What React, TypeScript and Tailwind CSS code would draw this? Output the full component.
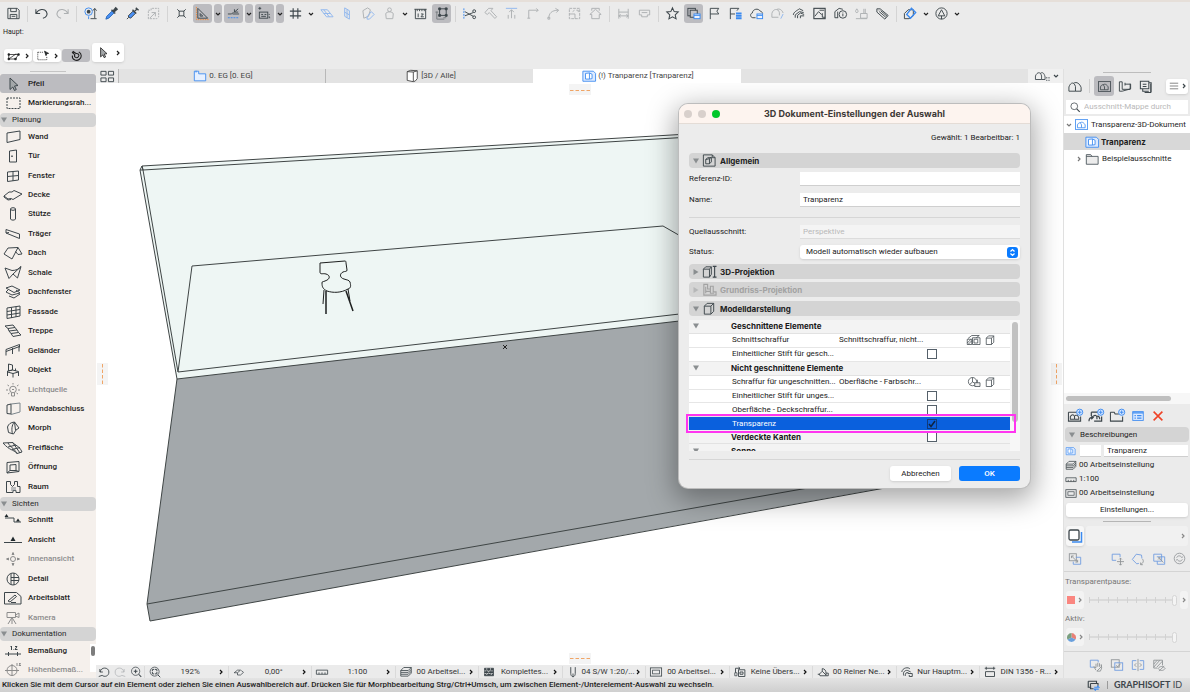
import React from "react";

type IconProps = {
  name: string;
  w?: number;
  h?: number;
  className?: string;
};

/* every glyph is drawn on a 20 x 16 grid */
const glyphs: Record<string, React.ReactNode> = {
  save: <><path d="M4 2.500h10l2 2v9H4z" /><path d="M7 2.500v3.500h6V2.500M6.500 13.500v-4.500h7v4.500M8 11h4" /></>,
  undo: <path d="M4 3.500v4.500h4.500M4.300 7.800C7 3 13 2.500 15.200 6c1.800 3.200 0 6.500-3.700 7" strokeWidth="1.100" />,
  redo: <path d="M16 3.500v4.500h-4.500M15.700 7.800C13 3 7 2.500 4.800 6c-1.800 3.200 0 6.500 3.700 7" strokeWidth="1.100" />,
  pick: <><circle cx="8" cy="6" r="4" stroke="#3b8af0" /><circle cx="8" cy="6" r="2" fill="#3d464b" stroke="none" /><path d="M8 11v3" stroke="#3b8af0" /><path d="M14.500 3v10M12.500 5l2-2.500 2 2.500M10 13.500h6.500" /></>,
  dropper: <><path d="M4 14l1-3 6-6 2 2-6 6z" fill="#4a90f5" stroke="#2465b8" /><path d="M10 4l4 4M12 5l2.500-3 1.500 1.500L13 6z" fill="#3d464b" strokeWidth="1.500" /></>,
  syringe: <><path d="M4 14l2-2M6 12l-.500-1.500 5-5 2.500 2.500-5 5z" fill="#4a90f5" /><path d="M10 4l4 4M12 6l3-3M13.500 2l3 2.500" strokeWidth="1.500" /></>,
  paste: <><path d="M4.500 13.500v-9h3v-2h8v9l-2 2z" strokeDasharray="2 1" /><path d="M8 7h4v4M12 7l-6 6" /></>,
  snap: <><rect x="7.500" y="5.500" width="5" height="5" /><path d="M5.500 3.500l2 2M14.500 3.500l-2 2M5.500 12.500l2-2M14.500 12.500l-2-2" /></>,
  triangle: <><path d="M5 2.500v10.500h10.500z" /><path d="M7.500 8v2.800h2.800z" /><path d="M3.500 1v13.500h13" stroke="#ee8a3c" strokeDasharray="1.500 1" /></>,
  guide: <><path d="M4 8.500h4l2-2M9 8.500h7M11 6.500l4-3.500M11 3.500v3h4" /><path d="M4 12.500h12" stroke="#3b8af0" strokeDasharray="2 1" /></>,
  tracker: <><path d="M5 1v3M3.500 2.500h3" /><rect x="4.500" y="6.500" width="9" height="6.500" /><path d="M6.500 9h2M10 9h2M6.500 11h5M15 8.500v1M15 11v1.500h1" /></>,
  grid: <path d="M7.500 2.500v11M12.500 2.500v11M4 5.500h12M4 10.500h12" strokeWidth="1.200" />,
  planeA: <path d="M4 4h7l6 7.500h-7zM7 4l6 7.500M7 8h7" stroke="#8fb6ee" />,
  planeB: <path d="M7 2l5 3v9l-5-3zM9.500 3.500v9M7 6.500l5 3" stroke="#8fb6ee" />,
  planeC: <><path d="M4 5l5-3 3 2-2 7-5 2z" /><path d="M13 6l3 3-5 5h-2.500v-2.500z" stroke="#8fb6ee" /></>,
  person: <><circle cx="10" cy="4" r="2" /><path d="M6.500 13.500l-.500-5c0-3 8-3 8 0l-.500 5z" /></>,
  ruler12: <><path d="M4.500 3.500v10h11v-10M3.500 3.500h13M6.500 3.500v2M9 3.500v2M11.500 3.500v2M14 3.500v2" /><path d="M7.500 8v4M10.500 8.500h2.500l-2.500 3h3" /></>,
  transform: <><rect x="8" y="3" width="7" height="7" /><path d="M7 2h2v2H7zM14 2h2v2h-2zM14 9h2v2h-2zM7 9h2v2H7z" fill="#3d464b" /><path d="M5 6v8h8M3.500 6.500h3M12 12.500h3" stroke="#777d80" /></>,
  scissors: <><path d="M4 2.500v11" stroke="#3b8af0" strokeDasharray="2 1" /><path d="M5 10.500l9-3.500M5 6l9 5" /><circle cx="15" cy="5.500" r="1.500" /><circle cx="15" cy="12" r="1.500" /></>,
  hammer: <path d="M4 7l4-4.500h4.500l-2 2.500 6 6.500-1.800 1.800-6-6.300L6.500 9z" />,
  stretch: <><path d="M4 2.500h12" stroke="#8fb6ee" /><path d="M10 4v9M7.500 6.500L10 4l2.500 2.500M6.500 13.500v-4M13.500 13.500v-4" /></>,
  corner: <path d="M6 13V4.500h10M14 2.500l2 2-2 2M4.500 13h3" />,
  arc: <path d="M5 13C5 8 8 4.500 15 4.500M12 2.500l3.500 2-2.500 2.500M4 12h2v2H4z" />,
  resize: <><rect x="4.500" y="2.500" width="11" height="11" strokeDasharray="3 1" /><path d="M4.500 8.500h6v5M12 4.500h2v2M8 6l2-1.500" /></>,
  house: <path d="M4 9l6-5.500L16 9h-2v4.500H6V9zM6 5V2.500h8V5" />,
  align: <path d="M5 3v10.500M15 3v10.500M5 6.500h10M5 10.500h10M7 9l-2 1.500 2 1.500M13 9l2 1.500-2 1.500" />,
  distribute: <path d="M4.500 4.500h11v5h-2.500v2H7v-2H4.500zM7 7h6" />,
  star: <path d="M10 2l1.800 4 4.300.400-3.200 3 .900 4.300L10 11.500l-3.800 2.200.900-4.300-3.200-3 4.300-.400z" strokeWidth="1.100" />,
  palette: <><rect x="4" y="2.500" width="8" height="8" /><rect x="6.500" y="4.500" width="7.500" height="7.500" fill="#c4c4c8" /><rect x="10.500" y="8.500" width="6.500" height="5" fill="#eef4ff" stroke="#3b8af0" /><path d="M10.500 10h6.500" stroke="#3b8af0" /></>,
  flag: <path d="M5.500 14V2.500h9l-2 3 2 3h-9" />,
  flag2: <><path d="M4.500 14V2.500h9l-2 2.500M4.500 8.500h5" /><path d="M10.500 7h6v2h-6zM10.500 9.500h6v2h-6zM10.500 12h6v2h-6z" fill="#3b8af0" stroke="none" /></>,
  cloud: <><path d="M9 12.500H6C3 12 3 8 5.500 7.500 6 3 12 2 14 5.500c2 .500 2.500 2 2.500 2.500" /><rect x="10.500" y="8.500" width="6" height="5" fill="#eef4ff" stroke="#3b8af0" /><path d="M10.500 10h6" stroke="#3b8af0" /></>,
  cloudEdit: <><path d="M11 12H4V8C5 3 11 2 12 7v3M9.500 3.500c3-1 5.500 1 6.500 4" /><path d="M16 8.500l-2.500 5" stroke="#8fb6ee" /></>,
  houses: <path d="M4.500 9.500c0-3 4.500-5 6.500-6.500l4 2M6.500 12.500v-3L11 6l4.500 1M9 13v-3l3-2.500 4 1.500M12 13v-2.500h4" />,
  picture: <><rect x="4" y="2.500" width="12" height="11" strokeWidth="1.200" /><path d="M5 11l4-5 3 3 1-1v4h3M10 4.500h5" /></>,
  info: <><path d="M7.500 12.500H4V6l4.500-3.500 4 1M7 12.500V6" /><circle cx="12.500" cy="9" r="4" /><path d="M12.500 8v3M12.500 6.500v.500" /></>,
  paint: <path d="M5 3c-2 2.500-1.500 4 0 4s2-1.500 0-4zM9 8h7v5H9zM12.500 8V3M4 13.500h12M14 3v5" />,
  tag: <path d="M4 3h3.500l8.500 7-3.500 4L4 6.500zM6.500 6l7 6M8 5l7 6M6 4.500h.500" />,
  cubes: <><path d="M3.500 8L7.500 4H13v6.500l-4.500 3h-5z" /><path d="M11 2.500l4.500 4.500L10 13 6 9z" stroke="#3b8af0" strokeWidth="1.500" /></>,
  circleTri: <><circle cx="10" cy="8" r="6" /><path d="M10 4l3.500 6.500h-7zM10 10.500V14" /></>,
  arrow: <path d="M7 2l8 7.500-3.500.500 1.800 3.500-1.800 1L9.800 11 7 13.500z" fill="#a3a7a9" />,
  marquee: <rect x="4" y="3" width="13" height="10.500" strokeDasharray="2 1" />,
  wall: <path d="M4 4l13-2v8.500L4 13.500z" />,
  door: <><path d="M6.500 3l7-1v12h-7z" /><path d="M9 7.500v1.500" strokeWidth="1.500" /></>,
  window: <path d="M4.500 4l11-1v9l-11 1.500zM10 3.500v9.500M4.500 8.500l11-1" />,
  slab: <path d="M1 9l5-4h3l2-1.500L19 7l-9 5.500-2-1-3 .500zM1 9v1l4 3 3-.500" />,
  column: <><ellipse cx="10" cy="3" rx="2.500" ry="1.300" /><path d="M7.500 3v10c0 1.500 5 1.500 5 0V3" /></>,
  beam: <path d="M3 3.500L16.500 8v4.500L3 7zM3 7l3-.500" />,
  roof: <path d="M1 9L5 3l10-.500L9 14zM15 2.500L19 9l-4 .500-2.500-3" />,
  shell: <path d="M2 3l7 2.500c4 0 7-1.500 9-4L14.500 13 10 9l-4 4.500zM10 9l8-7.500" />,
  skylight: <path d="M3 4l6-2 8 4-6 2.500zM3 8l6 3 8-2-4-3M6 12l5 2 6-4M5 6L3 8" />,
  facade: <path d="M4 4l13-2v10L4 14.500zM8.500 3.500V14M13 2.500V13M4 7.500l13-2M4 11l13-2" />,
  stair: <path d="M2 3l8-1 2 2.500-7 1zM5 5.500L6 8l8-1-2-2.500M6 8l2 2.500 7.500-1L14 7M8 10.500l2 3 8-1.500-2.500-2.500" />,
  rail: <path d="M3 8.500l13.500-5M3 6.500l13.500-5v3M3 6.500v6M9.500 5V11M16 3v5.500" />,
  chair: <path d="M5.500 2l4 1v5l-4 1zM4.500 9l5-1 6 1.500V14M4.500 9v5M10 11v4.500M4.500 10l5.500 1.500 5.500-1.500M12.500 6.500v2.500" />,
  bulb: <><circle cx="10" cy="7.500" r="3.300" /><path d="M8.500 11v3h3v-3M10 1v1.500M4.500 3l1.500 1M15.500 3L14 4M3 8h2M15 8h2M5 12l1.500-1M15 12l-1.500-1M9 7l1 1 1-1" /></>,
  wallend: <><path d="M4 4l4-1v10l-4-.500z" /><path d="M8 3l9-1v9l-9 2.500" stroke="#7c868c" /></>,
  morph: <path d="M4.500 7c1-3 3-4.500 7-5l4.500 6-3 2-2.500 4-5-1.500zM11.500 2c-3 3-3 8-2 12M11.500 2l1 8" />,
  mesh: <path d="M0 3l10-.500C12 6 16 5 19 12l-5 1.500C10 9 7 11 0 3zM5 7l8-2M9 9.500l8-2M5 3c3 5 5 4 9 10.500M10 3l7 10" />,
  opening: <path d="M4 3.500l12-1v10L4 14zM7 6l6-.500v6H7zM7 11.500L4 14M13 11.500l3 1" />,
  room: <><path d="M3.500 2.500h4v3l2 2 2-2v-3h3v5H17v6h-4v-2h-3v2H3.500z" /><path d="M8 9h5M8 11h5" stroke="#7c868c" /></>,
  section: <><path d="M2 6h9v4h7" /><path d="M1.500 5l2-3 2 3zM13 9.500l2-3 2 3z" fill="#1e272b" stroke="none" /></>,
  elevation: <><path d="M1 10.500h18" /><path d="M7.500 9L10 4.500 12.500 9z" fill="#1e272b" stroke="none" /></>,
  interior: <><circle cx="10" cy="8" r="2.500" /><path d="M9 3.500l1-2 1 2zM9 12.500l1 2 1-2zM5.500 7l-2 1 2 1zM14.500 7l2 1-2 1z" fill="#8c8c8c" /></>,
  detail: <><circle cx="10" cy="8" r="6" /><path d="M8 2.500v11M11 2v12M8 6.500h8M8 9.500h8" /></>,
  sheet: <><path d="M1.500 2.500h12l4.500 4v7.500H1.500z" /><path d="M5 11l7-6 1.500 1.500L7 12zM8 12.500h5" /></>,
  camera: <path d="M4 2.500h8.500v5H4zM12.500 5L16 3v4.500L12.500 6M9 7.500L5 14M9 7.500l4 6.500M9 8v6" />,
  dimension: <><path d="M2 11h16M5.500 9v4M14.500 9v4" /><path d="M7.500 4l1-1v4M10 6.500h.500M12 3.500h2l-2 3h2.500" /></>,
  level: <><circle cx="9" cy="8.500" r="5" /><path d="M2 8.500h14M9 2v12M14 1v3M16 1.500h1.500l-1.500 2h2" /></>,
  quad: <path d="M3.500 2.500h5.500v4H3.500zM11.500 2.500H17v4h-5.500zM3.500 9.500h5.500v4H3.500zM11.500 9.500H17v4h-5.500z" />,
  planTab: <path d="M3.500 2.500h5v3h8v8h-13zM5.500 2v2" stroke="#3b8af0" fill="#e6f0ff" />,
  box3d: <path d="M4.500 3l7 .500v11l-7-1.500zM11.500 3.500L16 2v9l-2.500 3h-2M4.500 3l4-1.500 7.500.500" fill="#fff" />,
  doc3d: <><path d="M3 2.500h12l2.500 2.500v9H3z" stroke="#3b8af0" fill="#dceaff" /><path d="M6 5l4.500-.500v7L6 11.500zM10.500 4.500l3 1.500v5l-3 .500" stroke="#3b8af0" fill="#fff" /></>,
  doc3dDark: <><path d="M4 2h9.500l3 3v9H4z" /><path d="M6.500 7l4-1v5.500h-4zM10.500 6l2-1.500v5l-2 2M6.500 7l2-2h4" /><path d="M13.500 2v3h3" /></>,
  clouds: <path d="M3.500 13V8.500C5.500 3 9 3 10.500 8v5zM8.500 4.500C12 2.500 15 5 16.500 9v4h-6" />,
  viewMap: <><rect x="2.500" y="2" width="15" height="12" /><path d="M5 12V8.500c2-4 4-3 5 0V12zM8 6c3-2 5 0 6.500 2.500V12H10" /></>,
  layout: <path d="M4 13V3h3v8h8.500V5M4 13H7l9-2.500V5.500H10M10 4v3" />,
  publish: <path d="M4 2.500h9v8H4zM6.500 10.500V13H13M15 5v9.500H8.500M13 4h2.500v10M6.500 5.500h4M6.500 8h4" strokeWidth="1.100" />,
  menu: <path d="M4 4h12M4 8h12M4 12h12" stroke="#555" />,
  search: <><circle cx="9" cy="7" r="4.500" /><path d="M12.300 10.500l4 4" strokeWidth="1.600" /></>,
  folder: <path d="M3.500 3h5L10 5h7v9H3.500zM3.500 5H10" fill="#ececec" />,
  newView: <><path d="M3 4.500h9M3 4.500V14h13V9M5 12V9c2-3 4-2 4.500 0v3zM10 8c2-1 3 0 4 2v2h-4" strokeWidth="1.100" /><circle cx="15" cy="4.500" r="3.300" stroke="#3b8af0" fill="#dceaff" /><path d="M13 4.500h4M15 2.500v4" stroke="#3b8af0" /></>,
  cloneView: <><path d="M5 4.500h7M5 4.500v4M16 9v5H8M7 9c2-2 4-1 4 1v2M11 9c2-1 3 1 3 3M2.500 14c0-3 1-4 4-4M5 8.500l2 1.500-2 2" strokeWidth="1.300" /><circle cx="15" cy="4.500" r="3.300" stroke="#3b8af0" fill="#dceaff" /><path d="M13 4.500h4M15 2.500v4" stroke="#3b8af0" /></>,
  newFolder: <><path d="M3 4.500h4l1 2h4M16 9v5H3V4.500" strokeWidth="1.100" /><circle cx="15" cy="4.500" r="3.300" stroke="#3b8af0" fill="#dceaff" /><path d="M13 4.500h4M15 2.500v4" stroke="#3b8af0" /></>,
  settingsBlue: <><rect x="4" y="3" width="12" height="10" stroke="#3b8af0" fill="#dceaff" /><path d="M4 4.500h12M6 7.500h1.500M6 10.500h1.500M9 7.500h5M9 10.500h5" stroke="#3b8af0" strokeWidth="1.300" /></>,
  remove: <path d="M5 3l10 10M15 3L5 13" stroke="#ef4226" strokeWidth="1.800" />,
  layers: <path d="M3 6l4-4h10l-4 4zM3 6v2.500h10l4-4V2M3 8.500V11h10l4-4V4.500M3 11v2.500h10l4-4V7" strokeWidth="1.100" />,
  scale: <path d="M2.500 5.500h15V11h-15zM6 11V8.500M10 11V8.500M14 11V8.500" strokeWidth="1.100" />,
  frame: <><rect x="2.500" y="2.500" width="15" height="11" strokeWidth="1.100" /><rect x="5.500" y="5.500" width="9" height="5" /></>,
  trace: <><path d="M7 14h9.500V4" stroke="#3b8af0" strokeWidth="1.500" /><rect x="4" y="2" width="10" height="10" rx="1.500" fill="#fff" strokeWidth="1.300" /></>,
  swap: <><rect x="3.500" y="2" width="8" height="8" /><path d="M11 6h5.500v8H8v-3" stroke="#6f9be0" /><path d="M6 4.500l7 7M6 4.500h2.500M6 4.500V7M13 11.500V9M13 11.500h-2.500" /></>,
  moveSel: <><path d="M9 9.500H4.500v-7h9V6" stroke="#6f9be0" /><path d="M14 7v8M10 11h8M12.500 8.500L14 7l1.500 1.500M12.500 13.500L14 15l1.500-1.500" /></>,
  rotateSel: <><path d="M8 2.500l6 1 .500 4M11 13l-2.500.500-5-5L8 2.500" stroke="#6f9be0" /><path d="M15 8c2 2 1 5-2 6M13 12v2.500h2.500" /></>,
  flipSel: <><path d="M4 2.500h9v8H4z" stroke="#6f9be0" /><path d="M7.500 5.500h9V14H8v-3.500" stroke="#6f9be0" /><path d="M9 8.500l2-2M9 6.500h2v2M11 8l4 4" /></>,
  reset: <><circle cx="10" cy="8" r="6.500" /><path d="M6.500 7c1-3 5-3 6.500 0l1-1.500M13.500 9c-1 3-5 3-6.500 0L6 10.500" /></>,
  hand: <><path d="M8 10.500H3.500v-8h9V5" stroke="#6f9be0" /><path d="M10 14l-2.500-4 2.500 1V6.500M12 10V5.500M14 10V6M16 10V7.500l.500 4L15 15h-4z" /></>,
  copies: <><rect x="3.500" y="2" width="9" height="8.500" /><rect x="7.500" y="5.500" width="9" height="8.500" stroke="#6f9be0" /><path d="M9 8.500l2 1.500 3-3.500" /></>,
  mirror: <><path d="M8 3H3.500v10H8M12 3h4.500v10H12" stroke="#6f9be0" /><path d="M10 1v14M8 6L6 8l2 2M12 6l2 2-2 2" /></>,
  hatchOff: <path d="M4 2.500h10v6M4 2.500v9h4M4 7l4-4.500M4 10.500l7-8M7.500 10.500l6.500-7M9 12c2-3 6-3 8 0-2 3-6 3-8 0zM10 15l6-6" />,
  zoomPrev: <path d="M4.500 4v4h4M5 8c.500-7 11.500-7 11.500 0 0 6-6 7-9 4.500L3 14" strokeWidth="1.200" />,
  zoomNext: <path d="M15.500 4v4h-4M15 8C14.500 1 3.500 1 3.500 8c0 6 6 7 9 4.500L17 14" />,
  zoomIn: <><circle cx="9.500" cy="7" r="5.500" /><path d="M13.500 11l3.500 3.500M7 7h5M9.500 4.500v5" strokeWidth="1.400" /></>,
  zoomFit: <><circle cx="9.500" cy="7.500" r="6" /><path d="M14 12l3 3M6.500 7V4.500H9M12.500 7V4.500H10M6.500 8v2.500H9M12.500 8v2.500H10" strokeWidth="1.300" /></>,
  orient: <path d="M3.500 9L8 5.500h4l-4 3.500zM8 12h4l4-3.500-3-2.500M8 9v3" />,
  partial: <><path d="M4 3h12v10H4z" fill="#3d464b" /><path d="M4 6.500h12M4 10h12M7 3v3.500M12 3v3.500M9.500 6.500V10M7 10v3M13 10v3" stroke="#e8e8e8" strokeDasharray="2 1" /></>,
  pen: <path d="M7 1.500V10c0 2 1 4 3 4.500 2-.500 3-2.500 3-4.500V1.500M10 10v4" strokeWidth="1.200" />,
  override: <><path d="M8 5h8.500v9H8zM4 9V3h6M8 1.500L10 3 8 4.500M10 8h4v3h-4z" strokeWidth="1.200" /><path d="M3 9h3v4H3z" /></>,
  reno: <path d="M5 11l4-4V3.500c3.500 0 5 3 5 6V13H6zM9 7l5 5M14 9.500h3V13h-3M3 11h3" strokeWidth="1.200" />,
  structure: <path d="M3 8c1-6 9-7 11-4M6 13c-2-3 0-8 5-7l4 2M8 13c-1-3 1-5 4-4M11 10h6v4h-4v-2" strokeWidth="1.200" />,
  dimStyle: <path d="M3 3h14M5 1v4M15 1v4M4 7.500h12V14H4z" strokeWidth="1.200" />,
  magnet: <path d="M10 5.500L6.500 3 5.500 4.500 8.500 7C7 10 11 12 13 9.500S12 5 10 5.500M5.500 8c-1 5 5 7.500 8.500 5s3.500-7-.500-9.500" strokeWidth="1.300" />,
  pathMode: <><path d="M3 6h13l-4 6H3zM3 12l10-7" /><path d="M2 5h2v2H2zM2 11h2v2H2zM11 11h2v2h-2zM15 5h2v2h-2z" fill="#1e272b" /></>,
  rectMode: <><path d="M3 3h8M3 3v10h12V8" strokeDasharray="1.500 1.200" /><path d="M12 1.500l5.500 3-2.500.500-1 2.500z" fill="#1e272b" /></>,
  proj: <><path d="M4 5.500h6.500v8.500H4zM4 5.500L6.500 3h6l-2 2.500M12.500 3v8l-2 3" /><path d="M14 2.500h4M14 14h4M16 2.500V14" strokeWidth="1.200" /></>,
  plan: <path d="M4.500 2.500h4v5h3v-3h3v6h3V14h-13zM6.500 10h5M6.500 5v7M11.500 8v4h4" strokeWidth="1.200" />,
  cube: <path d="M5 5.500h7v8.500H5zM5 5.500L8 2.500h7l-3 3M15 2.500V11l-3 3" />,
  hatch: <path d="M1 7h6v7H1zM1 12l5-5M2 14l5-5M8 5h10v9H8zM10 7h5v5h-5zM2 6l5-4h10l-4 3" />,
  surface: <><circle cx="8" cy="7.500" r="5.500" /><path d="M8 2v6l-4 3.500M8 8l4 2" /><path d="M11 9h7v5h-7zM14.500 9V5" fill="#eee" /></>,
  teamwork: <><path d="M3 3h11v3M3 3v8h4M6 6h10v3M6 6v7h4" strokeWidth="1.500" /><path d="M11 11h6l-2-2M17 13.500h-6l2 2" stroke="#3b8af0" strokeWidth="1.500" /></>,
  cloudMenu: <><path d="M2.500 12V8C4.500 3 8.500 3 9.500 8v4zM8 5c3-2 4.500 0 5.500 4v3h-4" /><path d="M15 10h1M15 13h1M17.500 10h1M17.500 13h1" strokeWidth="1.500" /></>,
};

const Icon: React.FC<IconProps> = ({ name, w = 18, h = 14, className = "" }) => (
  <svg
    width={w}
    height={h}
    viewBox="0 0 20 16"
    fill="none"
    stroke="currentColor"
    className={`shrink-0 ${className}`}
    aria-hidden="true"
  >
    {glyphs[name]}
  </svg>
);

const Chevron: React.FC<{ dir?: "down" | "right"; className?: string }> = ({ dir = "right", className = "" }) => (
  <svg width="6" height="6" viewBox="0 0 6 6" fill="none" stroke="currentColor" strokeWidth="1.2" className={`shrink-0 ${className}`} aria-hidden="true">
    <path d={dir === "down" ? "M1 2l2 2 2-2" : "M2 1l2 2-2 2"} />
  </svg>
);

const Disclosure: React.FC<{ open?: boolean; className?: string }> = ({ open = true, className = "" }) => (
  <svg width="6" height="6" viewBox="0 0 6 6" className={`shrink-0 fill-[#8a8e90] ${className}`} aria-hidden="true">
    <path d={open ? "M0 .500h6L3 5.500z" : "M.500 0v6l5-3z"} />
  </svg>
);

/* "|" separator, "v" drop-down arrow, "+" prefix = pressed, "-" prefix = disabled */
const toolbar = [
  "save", "|", "undo", "-redo", "|", "pick", "dropper", "syringe", "-paste", "|",
  "snap", "+triangle", "+v", "+guide", "+v", "+tracker", "+v", "grid", "v",
  "-planeA", "-planeB", "-planeC", "-person", "v", "ruler12", "+transform", "|",
  "scissors", "-hammer", "-stretch", "-corner", "-arc", "-resize", "-house", "|",
  "-align", "-distribute", "|", "star", "+palette", "flag", "flag2", "cloud",
  "-cloudEdit", "houses", "picture", "info", "-paint", "tag", "|", "cubes", "v",
  "circleTri", "v",
];

const Toolbar = () => (
  <div className="flex h-[23px] shrink-0 items-center gap-0.5 overflow-hidden pl-1">
    {toolbar.map((item, i) => {
      if (item === "|") {
        return <span key={i} className="mx-0.5 h-4 w-px shrink-0 bg-[#d4d4d4]" />;
      }
      const pressed = item[0] === "+";
      const disabled = item[0] === "-";
      const name = item.replace(/^[+-]/, "");
      return (
        <button
          key={i}
          aria-label={name === "v" ? "Optionen" : name}
          disabled={disabled}
          className={`flex h-[19px] shrink-0 items-center justify-center rounded-[3px] ${name === "v" ? "w-2" : "w-[19px]"} ${
            pressed ? "bg-[#bcbcc0]" : ""
          } ${disabled ? "text-[#adb0b2]" : "text-[#3d464b]"}`}
        >
          {name === "v" ? <Chevron dir="down" className="text-[#222]" /> : <Icon name={name} w={19} h={15} />}
        </button>
      );
    })}
  </div>
);

const InfoBox = () => (
  <div className="shrink-0">
    <p className="px-[3px] pt-px text-[7px] leading-3">Haupt:</p>
    <div className="flex h-[31px] items-end gap-px px-1 pb-[7px]">
      <button aria-label="Geometriemethode" className="flex h-[13px] w-7 items-center justify-center gap-0.5 rounded-[3px] bg-white shadow-sm">
        <Icon name="pathMode" w={16} h={12} />
        <Chevron />
      </button>
      <button aria-label="Auswahlmethode" className="flex h-[13px] w-7 items-center justify-center gap-0.5 rounded-[3px] bg-white shadow-sm">
        <Icon name="rectMode" w={16} h={12} />
        <Chevron />
      </button>
      <button aria-label="Magnet" className="flex h-[13px] w-7 items-center justify-center rounded-[3px] bg-[#bcbcc0]">
        <Icon name="magnet" w={16} h={13} />
      </button>
      <button aria-label="Pfeilwerkzeug" className="ml-px flex h-[19px] w-8 items-center justify-center gap-1 rounded-[3px] bg-white shadow-sm">
        <Icon name="arrow" w={16} h={13} />
        <Chevron />
      </button>
    </div>
  </div>
);

type Tool = { label: string; icon: string; active?: boolean; disabled?: boolean };

const sections: { title?: string; tools: Tool[] }[] = [
  {
    tools: [
      { label: "Pfeil", icon: "arrow", active: true },
      { label: "Markierungsrah...", icon: "marquee" },
    ],
  },
  {
    title: "Planung",
    tools: [
      { label: "Wand", icon: "wall" },
      { label: "Tür", icon: "door" },
      { label: "Fenster", icon: "window" },
      { label: "Decke", icon: "slab" },
      { label: "Stütze", icon: "column" },
      { label: "Träger", icon: "beam" },
      { label: "Dach", icon: "roof" },
      { label: "Schale", icon: "shell" },
      { label: "Dachfenster", icon: "skylight" },
      { label: "Fassade", icon: "facade" },
      { label: "Treppe", icon: "stair" },
      { label: "Geländer", icon: "rail" },
      { label: "Objekt", icon: "chair" },
      { label: "Lichtquelle", icon: "bulb", disabled: true },
      { label: "Wandabschluss", icon: "wallend" },
      { label: "Morph", icon: "morph" },
      { label: "Freifläche", icon: "mesh" },
      { label: "Öffnung", icon: "opening" },
      { label: "Raum", icon: "room" },
    ],
  },
  {
    title: "Sichten",
    tools: [
      { label: "Schnitt", icon: "section" },
      { label: "Ansicht", icon: "elevation" },
      { label: "Innenansicht", icon: "interior", disabled: true },
      { label: "Detail", icon: "detail" },
      { label: "Arbeitsblatt", icon: "sheet" },
      { label: "Kamera", icon: "camera", disabled: true },
    ],
  },
  {
    title: "Dokumentation",
    tools: [
      { label: "Bemaßung", icon: "dimension" },
      { label: "Höhenbemaß...", icon: "level", disabled: true },
    ],
  },
];

const ToolBox = () => (
  <aside className="relative -mb-0.5 flex w-24 shrink-0 flex-col overflow-hidden bg-[#f5f0ec]">
    <div className="flex h-[5px] shrink-0 items-center justify-center bg-[#ebebeb]">
      <span className="h-px w-9 bg-[#c4c4c4]" />
    </div>
    {sections.map((section, i) => (
      <React.Fragment key={i}>
        {section.title && (
          <button className="flex h-3.5 shrink-0 items-center gap-[5px] rounded-sm bg-[#d4d4d4] pl-px text-left text-[#2a2a2a]">
            <Disclosure />
            {section.title}
          </button>
        )}
        {section.tools.map((tool) => (
          <button
            key={tool.label}
            disabled={tool.disabled}
            className={`flex min-h-0 flex-1 items-center gap-[5px] whitespace-nowrap pl-[3px] text-left font-medium ${
              tool.active ? "rounded-[3px] bg-[#bcbcc0]" : ""
            } ${tool.disabled ? "text-[#8c8c8c]" : "text-[#1e1e1e]"}`}
          >
            <Icon name={tool.icon} w={20} h={16} className={tool.disabled ? "" : "text-[#3d464b]"} />
            {tool.label}
          </button>
        ))}
      </React.Fragment>
    ))}
    <span className="absolute bottom-2 right-0 h-7 w-[6px] bg-white">
      <span className="mx-auto mt-0.5 block h-2.5 w-1 rounded-full bg-[#7d7d7d]" />
    </span>
  </aside>
);

const TabBar = () => (
  <div className="flex h-3.5 shrink-0 bg-[#e3e3e3] text-[#444]">
    <button aria-label="Tab-Übersicht" className="flex w-[23px] items-center justify-center border-r border-[#b8b8b8] bg-[#ebebeb] text-[#3d464b]">
      <Icon name="quad" w={20} h={15} />
    </button>
    <button className="flex w-[207px] items-center justify-center border-r border-[#b8b8b8]">
      <Icon name="planTab" />
      0. EG [0. EG]
    </button>
    <button className="flex w-[207px] items-center justify-center">
      <Icon name="box3d" />
      [3D / Alle]
    </button>
    <button className="flex w-[208px] items-center justify-center bg-white">
      <Icon name="doc3d" />
      (!) Tranparenz [Tranparenz]
    </button>
    <span className="flex-1" />
    <button aria-label="Darstellung" className="flex w-[35px] items-center justify-center gap-0.5 bg-[#f0f0f0] text-[#3d464b]">
      <Icon name="cloudMenu" />
      <Chevron dir="down" />
    </button>
  </div>
);

const Scene = () => (
  <svg className="absolute inset-0 size-full" viewBox="96 83 967 582" preserveAspectRatio="xMinYMin slice" fill="none" stroke="#3f4545" strokeWidth="1" strokeLinejoin="round">
    <path d="M142 166l598-34v182L177 379 140 170z" fill="#eef6f4" stroke="none" />
    <path d="M177 379L740 314l165 158v12L150 621l-3-17z" fill="#a3a8ab" stroke="none" />
    <path d="M142 166L740 131M143 170l597-36M142 166l-2 4h3l-1-4" />
    <path d="M140 170l37 209M143 170l35 202M142 166l1 4" />
    <path d="M192 266l-14 106M192 266l471-40 40 23M178 372l562-65" />
    <path d="M177 379l563-65" />
    <path d="M177 379l-30 225 3 17M147 604l661-116 92-16M150 621l735-133 20-4" />
    <path d="M503 345l4 4M507 345l-4 4" stroke="#222" />
    <g stroke="#1d1f1f">
      <path d="M320 263l25-2c1 0 1 1 1 2l1 7c0 2-2 1-4 2-4 2-3 6 1 7 3 1 5 1 6 3 1 4 1 6-2 7-7 4-15 4-21 2-4-2-5-4-5-8 0-2 1-1 3-2 6-2 5-6 1-7-3-1-6 1-6-2z" />
      <path d="M326 291v23M346 291l7 20" strokeWidth="1.500" />
      <path d="M324 290l-1 14M348 289l2 12" />
    </g>
    <g stroke="none" fill="#f4f4f4">
      <path d="M569 84h22v11h-22zM569 653h22v11h-22zM97 363h11v22H97zM1051 363h11v22h-11z" />
    </g>
    <path d="M570 90.500h20M570 658.500h20M102.500 364v20M1056.500 364v20" stroke="#f0a566" strokeDasharray="3.500 2" />
  </svg>
);

const Bar: React.FC<{ icon: string; title: string; open?: boolean; disabled?: boolean; className: string }> = (props) => {
  const { icon, title, open = false, disabled = false, className } = props;
  return (
    <button
      disabled={disabled}
      className={`flex h-[15px] w-full items-center rounded-sm bg-[#d4d4d4] pl-1 text-left font-['Inter',sans-serif] font-bold ${disabled ? "text-[#a2a2a2]" : "text-[#222]"} ${className}`}
    >
      <Disclosure open={open} className={disabled ? "opacity-40" : ""} />
      <Icon name={icon} w={20} h={15} className={disabled ? "mr-px" : "mr-px text-[#3d464b]"} />
      {title}
    </button>
  );
};

type Row = { label: string; group?: boolean; arrow?: boolean; value?: string; icons?: string[]; check?: boolean };

const rows: Row[] = [
  { label: "Geschnittene Elemente", group: true, arrow: true },
  { label: "Schnittschraffur", value: "Schnittschraffur, nicht...", icons: ["hatch", "cube"] },
  { label: "Einheitlicher Stift für gesch...", check: false },
  { label: "Nicht geschnittene Elemente", group: true, arrow: true },
  { label: "Schraffur für ungeschnitten...", value: "Oberfläche - Farbschr...", icons: ["surface", "cube"] },
  { label: "Einheitlicher Stift für unges...", check: false },
  { label: "Oberfläche - Deckschraffur...", check: false },
  { label: "Transparenz", check: true },
  { label: "Verdeckte Kanten", group: true, check: false },
  { label: "Sonne", group: true, arrow: true },
];

const ModelTable = () => (
  <div className="relative mt-1">
    <div className="flex h-[131px] overflow-hidden">
      <table className="h-[138px] flex-1 table-fixed border-collapse whitespace-nowrap bg-white">
        <colgroup>
          <col className="w-[42px]" />
          <col className="w-[108px]" />
          <col className="w-[86px]" />
          <col />
        </colgroup>
        <tbody>
          {rows.map((row) => (
            <tr
              key={row.label}
              className={
                row.check
                  ? "bg-[#0a60dd] text-white"
                  : row.group
                  ? "border-b border-[#e2e2e2] bg-[#f3f3f3] font-['Inter',sans-serif] text-[#1a1a1a]"
                  : "border-b border-[#e6e6e6] text-[#222]"
              }
            >
              <td className="p-0 pl-1">{row.arrow && <Disclosure />}</td>
              <th
                scope="row"
                colSpan={row.value ? 1 : 2}
                className={`p-0 text-left leading-[12px] ${row.group ? "font-bold" : "pl-px font-normal"}`}
              >
                {row.label}
              </th>
              {row.value && <td className="p-0 leading-[12px]">{row.value}</td>}
              <td className="p-0">
                {row.check !== undefined && (
                  <span className="relative ml-[2px] block size-[10px]">
                    <input
                      type="checkbox"
                      aria-label={row.label}
                      defaultChecked={row.check}
                      className={`peer block size-[10px] appearance-none border ${row.check ? "border-[#123a78]" : "border-[#55606a] bg-white"}`}
                    />
                    <svg viewBox="0 0 10 10" className="pointer-events-none absolute inset-0 hidden size-[10px] peer-checked:block" fill="none" stroke="#10233f" strokeWidth="1.5" aria-hidden="true">
                      <path d="M2 5l2 2.500L8 2" />
                    </svg>
                  </span>
                )}
                {row.icons && (
                  <span className="flex justify-end pr-[12px] text-[#3d464b]">
                    {row.icons.map((icon) => (
                      <Icon key={icon} name={icon} w={16} h={12} />
                    ))}
                  </span>
                )}
              </td>
            </tr>
          ))}
        </tbody>
      </table>
      <div className="w-[10px] bg-[#f7f7f7] px-[2px] pt-0.5">
        <div className="h-[100px] rounded-full bg-[#c1c1c1]" />
      </div>
    </div>
    <div className="pointer-events-none absolute -left-[3px] right-1 top-[94px] h-[19px] border-2 border-[#ff35f0]" />
  </div>
);

const SettingsDialog = () => (
  <div role="dialog" aria-labelledby="dlg-title" className="absolute right-[33px] top-[21px] w-[351px] overflow-hidden rounded-[9px] bg-[#ececec] shadow-[0_8px_28px_4px_rgba(0,0,0,0.35)] ring-1 ring-[#bdbdbd]">
    <div className="relative flex h-5 items-center justify-center border-b border-[#e4dcd6] bg-[#fdf4ef]">
      <div className="absolute left-[5px] flex gap-[6px]">
        <button aria-label="Schließen" className="size-2 rounded-full bg-[#d8d0cc]" />
        <button aria-label="Minimieren" className="size-2 rounded-full bg-[#d8d0cc]" />
        <button aria-label="Vergrößern" className="size-2 rounded-full bg-[#00c72b]" />
      </div>
      <h2 id="dlg-title" className="font-['Inter',sans-serif] text-[9px] font-bold text-[#3c3836]">3D Dokument-Einstellungen der Auswahl</h2>
    </div>
    <form className="px-[10px] pb-[7px] text-[#222]" onSubmit={(e) => e.preventDefault()}>
      <p className="mb-[9px] mt-2 text-right leading-3">Gewählt: 1 Bearbeitbar: 1</p>
      <Bar icon="doc3dDark" title="Allgemein" open className="" />
      <div className="mt-1 flex items-center">
        <label htmlFor="ref" className="w-[111px]">Referenz-ID:</label>
        <input id="ref" className="h-3.5 flex-1 border-b border-[#cfcfcf] bg-white px-[3px]" />
      </div>
      <div className="mt-[7px] flex items-center">
        <label htmlFor="name" className="w-[111px]">Name:</label>
        <input id="name" defaultValue="Tranparenz" className="h-3.5 flex-1 border-b border-[#cfcfcf] bg-white px-[3px]" />
      </div>
      <hr className="mt-[10px] border-[#d6d6d6]" />
      <div className="mt-[7px] flex items-center">
        <label htmlFor="source" className="w-[111px]">Quellausschnitt:</label>
        <input id="source" disabled defaultValue="Perspektive" className="h-3.5 flex-1 border-b border-[#dcdcdc] bg-[#f4f4f4] px-[3px] text-[#b9b9b9]" />
      </div>
      <div className="relative mt-[6px] flex items-center">
        <label htmlFor="status" className="w-[111px]">Status:</label>
        <select id="status" className="h-3.5 flex-1 appearance-none rounded-[3px] bg-white px-[6px] shadow-sm">
          <option>Modell automatisch wieder aufbauen</option>
        </select>
        <svg width="11" height="11" viewBox="0 0 11 11" className="pointer-events-none absolute right-0.5 rounded-[3px] bg-[#0a7bff]" fill="none" stroke="#fff" strokeWidth="1.2" aria-hidden="true">
          <path d="M3.500 4.500l2-2 2 2M3.500 6.500l2 2 2-2" />
        </svg>
      </div>
      <Bar icon="proj" title="3D-Projektion" className="mt-[5px]" />
      <Bar icon="plan" title="Grundriss-Projektion" disabled className="mt-[3px]" />
      <Bar icon="cube" title="Modelldarstellung" open className="mt-1" />
      <ModelTable />
      <hr className="mt-2 border-[#d6d6d6]" />
      <div className="mt-[6px] flex justify-end gap-2">
        <button type="button" className="h-[15px] w-[61px] rounded-[3px] bg-white shadow-sm">Abbrechen</button>
        <button type="submit" className="h-[15px] w-[61px] rounded-[3px] bg-[#0a7bff] font-medium text-white">OK</button>
      </div>
    </form>
  </div>
);

const quickOptions = [
  { icon: "zoomFit", label: "192%" },
  { icon: "orient", label: "0,00°" },
  { icon: "scale", label: "1:100" },
  { icon: "layers", label: "00 Arbeitsei..." },
  { icon: "partial", label: "Komplettes..." },
  { icon: "pen", label: "04 S/W 1:20/..." },
  { icon: "frame", label: "00 Arbeitsei..." },
  { icon: "override", label: "Keine Übers..." },
  { icon: "reno", label: "00 Reiner Ne..." },
  { icon: "structure", label: "Nur Hauptm..." },
  { icon: "dimStyle", label: "DIN 1356 - R..." },
];

const QuickOptions = () => (
  <div className="flex h-[13px] shrink-0 items-center bg-[#ebebeb] text-[#333]">
    <div className="flex w-12 shrink-0 items-center justify-end text-[#3d464b]">
      <button aria-label="Vorheriger Zoom"><Icon name="zoomPrev" w={16} h={12} /></button>
      <button aria-label="Nächster Zoom" disabled className="text-[#b0b3b5]"><Icon name="zoomNext" w={16} h={12} /></button>
      <button aria-label="Vergrößern"><Icon name="zoomIn" w={16} h={12} /></button>
    </div>
    {quickOptions.map((option, i) => (
      <button key={i} className="flex min-w-0 flex-1 items-center overflow-hidden whitespace-nowrap border-l border-[#dadada] pl-0.5 pr-1">
        <Icon name={option.icon} w={16} h={12} className="text-[#3d464b]" />
        <span className="flex-1 text-center">{option.label}</span>
        <Chevron className="text-[#111]" />
      </button>
    ))}
  </div>
);

const Slider: React.FC<{ label: string }> = ({ label }) => (
  <div className="relative flex flex-1 items-center">
    <div className="absolute inset-x-0.5 flex h-1.5 items-center justify-between bg-[linear-gradient(#dadada,#dadada)] bg-[length:100%_2px] bg-center bg-no-repeat">
      {Array.from({ length: 10 }, (_, i) => (
        <span key={i} className="h-1.5 w-px bg-[#d2d2d2]" />
      ))}
    </div>
    <input
      type="range"
      defaultValue={100}
      aria-label={label}
      className="relative h-3 w-full appearance-none bg-transparent [&::-webkit-slider-thumb]:h-[11px] [&::-webkit-slider-thumb]:w-[5px] [&::-webkit-slider-thumb]:appearance-none [&::-webkit-slider-thumb]:rounded-sm [&::-webkit-slider-thumb]:border [&::-webkit-slider-thumb]:border-[#d5d5d5] [&::-webkit-slider-thumb]:bg-[#f4f4f4]"
    />
  </div>
);

const Navigator = () => (
  <aside className="flex w-[127px] shrink-0 flex-col overflow-hidden border-l border-[#e0e0e0] bg-[#ebebeb] text-[#1e1e1e]">
    <div className="flex h-[6px] shrink-0 items-center justify-center">
      <span className="h-px w-12 bg-[#bdbdbd]" />
    </div>
    <div className="flex h-[22px] shrink-0 items-center pl-px pr-0.5 text-[#3d464b]">
      <button aria-label="Projekt-Mappe" className="mr-1"><Icon name="clouds" w={20} h={15} /></button>
      <span className="mr-1 h-3.5 w-px bg-[#d0d0d0]" />
      <button aria-label="Ausschnitt-Mappe" className="flex h-5 w-5 items-center justify-center rounded-[3px] bg-[#bcbcc0]"><Icon name="viewMap" w={17} h={13} /></button>
      <button aria-label="Layoutbuch" className="ml-px"><Icon name="layout" w={20} h={15} /></button>
      <button aria-label="Publisher-Sets" className="ml-px"><Icon name="publish" w={20} h={15} /></button>
      <button aria-label="Menü" className="ml-auto flex h-[15px] w-[22px] items-center justify-center rounded-[3px] bg-white shadow-sm">
        <Icon name="menu" w={14} h={12} />
        <Chevron />
      </button>
    </div>
    <label className="mx-0.5 mt-[3px] flex h-3.5 shrink-0 items-center bg-white text-[#3d464b]">
      <Icon name="search" w={18} h={12} />
      <input type="search" aria-label="Ausschnitt-Mappe durchsuchen" placeholder="Ausschnitt-Mappe durch" className="min-w-0 flex-1 placeholder:text-[#b9b9b9]" />
    </label>
    <ul className="mt-0.5 min-h-0 flex-1 overflow-hidden whitespace-nowrap bg-white">
      <li className="flex h-[17px] items-center gap-px pl-0.5">
        <Chevron dir="down" className="text-[#777]" />
        <Icon name="viewMap" w={17} h={13} className="text-[#3b8af0]" />
        Transparenz-3D-Dokument
      </li>
      <li className="flex h-[17px] items-center bg-[#d8d8d8] pl-[19px] font-['Inter',sans-serif] font-bold">
        <Icon name="doc3d" />
        Tranparenz
      </li>
      <li className="flex h-[17px] items-center gap-px pl-3">
        <Chevron className="text-[#777]" />
        <Icon name="folder" className="text-[#4c565b]" />
        Beispielausschnitte
      </li>
    </ul>
    <div className="h-[11px] shrink-0 bg-[#f7f7f7] px-[2px] pt-[3px]">
      <div className="h-[5px] w-[105px] rounded-full bg-[#bfbfbf]" />
    </div>
    <div className="flex h-[23px] shrink-0 items-center gap-px pl-px text-[#3d464b]">
      <button aria-label="Neuer Ausschnitt"><Icon name="newView" w={20} h={15} /></button>
      <button aria-label="Ordner klonen"><Icon name="cloneView" w={20} h={15} /></button>
      <button aria-label="Neuer Ordner"><Icon name="newFolder" w={20} h={15} /></button>
      <button aria-label="Ausschnitt-Einstellungen" className="ml-px"><Icon name="settingsBlue" /></button>
      <button aria-label="Löschen" className="ml-px"><Icon name="remove" /></button>
    </div>
    <button className="mx-px flex h-[15px] shrink-0 items-center gap-[5px] rounded-sm bg-[#d4d4d4] pl-1 text-left">
      <Disclosure />
      Beschreibungen
    </button>
    <div className="mt-0.5 flex h-[13px] shrink-0 items-center gap-[3px] pr-[2px]">
      <Icon name="doc3d" w={13} h={10} />
      <input aria-label="ID" className="h-3 w-[21px] border-b border-[#cfcfcf] bg-white" />
      <input aria-label="Name" defaultValue="Tranparenz" className="h-3 min-w-0 flex-1 border-b border-[#cfcfcf] bg-white px-[3px]" />
    </div>
    <div className="pt-px">
      {[["layers", "00 Arbeitseinstellung"], ["scale", "1:100"], ["frame", "00 Arbeitseinstellung"]].map(([icon, text], i) => (
        <p key={i} className="flex h-[14px] items-center gap-px whitespace-nowrap">
          <Icon name={icon} w={14} h={11} className="text-[#3d464b]" />
          {text}
        </p>
      ))}
    </div>
    <button className="mx-0.5 mt-[3px] h-3.5 shrink-0 rounded-[3px] bg-white shadow-sm">Einstellungen...</button>
    <div className="flex h-[9px] shrink-0 items-center justify-center">
      <span className="h-px w-12 bg-[#b5b5b5]" />
    </div>
    <div className="flex h-5 shrink-0 gap-[2px] px-0.5 text-[#3d464b]">
      <button aria-label="Transparentpause" className="flex w-[18px] items-center justify-center rounded-[3px] bg-[#f7f7f7] shadow-sm"><Icon name="trace" w={20} h={16} /></button>
      <button aria-label="Referenz wählen" className="flex flex-1 items-center justify-end rounded-[3px] bg-[#f1f1f1] pr-0.5"><Chevron className="text-[#888]" /></button>
    </div>
    <div className="flex h-[26px] shrink-0 items-center gap-[3px] border-b border-[#d4d4d4] pl-0.5 pr-0.5 text-[#8f9396]">
      <button aria-label="Tauschen" className="mr-auto"><Icon name="swap" /></button>
      <button aria-label="Verschieben"><Icon name="moveSel" /></button>
      <button aria-label="Drehen"><Icon name="rotateSel" /></button>
      <button aria-label="Spiegeln"><Icon name="flipSel" /></button>
      <button aria-label="Zurücksetzen"><Icon name="reset" w={17} h={13} /></button>
    </div>
    <p className="mt-1 shrink-0 pl-px leading-3 text-[#777]">Transparentpause:</p>
    <div className="mt-[3px] flex h-[18px] shrink-0 items-center gap-[3px] px-0.5">
      <button aria-label="Referenzfarbe" className="flex h-full w-[18px] items-center justify-center gap-0.5 rounded-[3px] bg-[#f3f3f3]">
        <span className="size-2 bg-[#fa8680]" />
        <Chevron className="text-[#888]" />
      </button>
      <Slider label="Transparentpause" />
      <button aria-label="Mehr" className="flex h-full w-2 items-center justify-center rounded-[3px] bg-[#f3f3f3]"><Chevron className="text-[#888]" /></button>
    </div>
    <p className="mt-1 shrink-0 pl-px leading-3 text-[#777]">Aktiv:</p>
    <div className="mt-[3px] flex h-[18px] shrink-0 items-center gap-[3px] pl-0.5 pr-[13px]">
      <button aria-label="Aktive Farbe" className="flex h-full w-[18px] items-center justify-center gap-0.5 rounded-[3px] bg-[#f3f3f3]">
        <svg width="9" height="9" viewBox="0 0 9 9" aria-hidden="true">
          <path d="M4.500 4.500V0A4.500 4.500 0 0 1 8.500 6.500z" fill="#e98077" />
          <path d="M4.500 4.500l4 2a4.500 4.500 0 0 1-8 0z" fill="#6aa0dd" />
          <path d="M4.500 4.500l-4 2A4.500 4.500 0 0 1 4.500 0z" fill="#7a9f7f" />
        </svg>
        <Chevron className="text-[#888]" />
      </button>
      <Slider label="Aktiv" />
    </div>
    <div className="mt-[5px] flex h-[27px] shrink-0 items-center justify-center gap-[3px] border-t border-[#d4d4d4] text-[#8f9396]">
      <button aria-label="Ziehen"><Icon name="hand" /></button>
      <button aria-label="Vergleichen"><Icon name="copies" /></button>
      <button aria-label="Teiler"><Icon name="mirror" /></button>
      <button aria-label="Schraffuren ausblenden"><Icon name="hatchOff" /></button>
    </div>
  </aside>
);

const StatusLine = () => (
  <footer className="relative flex h-3.5 shrink-0 items-center justify-between whitespace-nowrap bg-gradient-to-b from-[#e3e3e3] to-[#cfcfcf] pl-0.5 pr-2 text-[#222]">
    <p className="font-medium">
      Klicken Sie mit dem Cursor auf ein Element oder ziehen Sie einen Auswahlbereich auf. Drücken Sie für Morphbearbeitung Strg/Ctrl+Umsch, um zwischen Element-/Unterelement-Auswahl zu wechseln.
    </p>
    <div className="flex items-center gap-[6px] text-[#3d464b]">
      <Icon name="teamwork" w={15} h={12} />
      <span className="h-2 w-px bg-[#9a9a9a]" />
      <span className="font-['Lato',sans-serif] text-[9px] leading-3">
        <span className="font-bold">GRAPHISOFT</span> ID
      </span>
    </div>
  </footer>
);

export default function App() {
  return (
    <div className="flex h-screen flex-col overflow-hidden bg-[#ebebeb] font-['Roboto',sans-serif] text-[8px] leading-[10px] text-[#1e1e1e]">
      <div className="h-0.5 shrink-0 bg-[#e6dfd9]" />
      <Toolbar />
      <InfoBox />
      <div className="flex min-h-0 flex-1">
        <ToolBox />
        <main className="flex min-w-0 flex-1 flex-col">
          <TabBar />
          <div className="relative min-h-0 flex-1 overflow-hidden bg-white">
            <Scene />
            <SettingsDialog />
          </div>
          <QuickOptions />
        </main>
        <Navigator />
      </div>
      <StatusLine />
    </div>
  );
}
